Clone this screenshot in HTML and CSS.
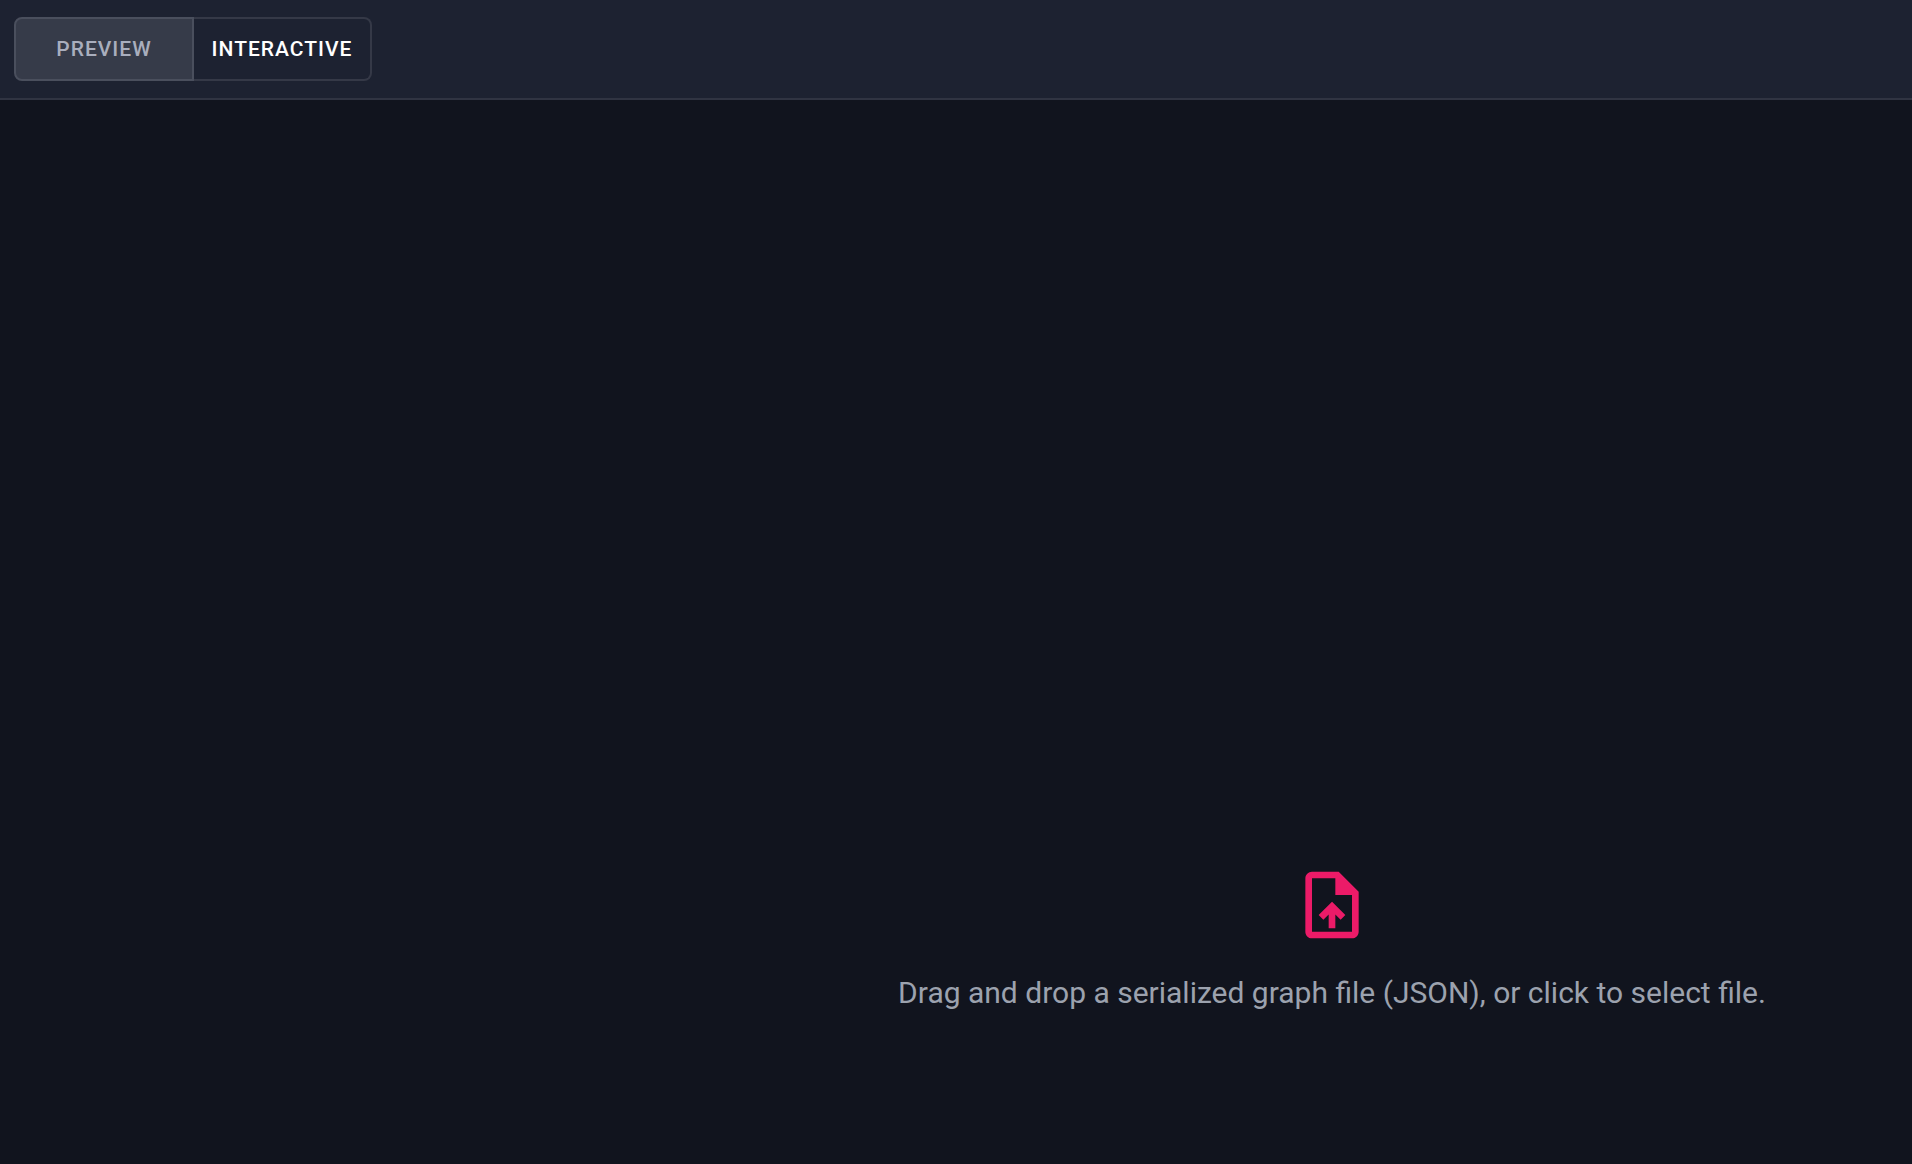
FILE: index.html
```html
<!DOCTYPE html>
<html lang="en">
<head>
<meta charset="utf-8">
<meta name="viewport" content="width=device-width, initial-scale=1">
<title>Graph viewer</title>
<link rel="stylesheet" href="styles.css">
</head>
<body>
<header class="toolbar">
  <div class="toggle-group" role="group" aria-label="View mode">
    <button class="toggle toggle-selected" type="button" aria-pressed="true">PREVIEW</button>
    <button class="toggle" type="button" aria-pressed="false">INTERACTIVE</button>
  </div>
</header>
<main class="workspace">
  <label class="dropzone">
    <input class="file-input" type="file" accept="application/json">
    <svg class="upload-icon" viewBox="0 0 24 24" aria-hidden="true">
      <path d="M14 2H6c-1.1 0-1.99.9-1.99 2L4 20c0 1.1.89 2 1.99 2H18c1.1 0 2-.9 2-2V8l-6-6zm4 18H6V4h7v5h5v11zM8 15.01l1.41 1.41L11 14.84V19h2v-4.16l1.59 1.59L16 15.01 12.01 11z"/>
    </svg>
    <span class="hint">Drag and drop a serialized graph file (JSON), or click to select file.</span>
  </label>
</main>
</body>
</html>
```
FILE: styles.css
```css
* {
  box-sizing: border-box;
}

body {
  margin: 0;
  min-height: 100vh;
  display: flex;
  flex-direction: column;
  background: #11141e;
  font-family: Roboto, "Liberation Sans", sans-serif;
}

.toolbar {
  display: flex;
  padding: 17px 14px;
  background: #1d2231;
  border-bottom: 2px solid #303442;
}

.toggle-group {
  display: grid;
  grid-template-columns: 180px 178px;
  height: 64px;
  border-radius: 8px;
}

.toggle {
  padding: 0;
  border: 2px solid #353947;
  border-left: 0;
  border-radius: 0 8px 8px 0;
  background: transparent;
  color: #fff;
  font: 500 21px/28px Roboto, "Liberation Sans", sans-serif;
  letter-spacing: 1px;
  cursor: pointer;
}

.toggle-selected {
  border: 2px solid #4a4f5d;
  border-radius: 8px 0 0 8px;
  background: #363b49;
  color: #a9aebd;
}

.workspace {
  flex: 1;
  display: flex;
  flex-direction: column;
  justify-content: flex-end;
  padding: 0 0 151px 752px;
}

.dropzone {
  display: flex;
  flex-direction: column;
  align-items: center;
  gap: 28px;
  cursor: pointer;
}

.file-input {
  position: absolute;
  width: 1px;
  height: 1px;
  opacity: 0;
}

.upload-icon {
  width: 80px;
  height: 80px;
  fill: #ec1b68;
}

.hint {
  color: #9ca2ae;
  font-size: 30px;
  line-height: 40px;
  white-space: nowrap;
}
```
